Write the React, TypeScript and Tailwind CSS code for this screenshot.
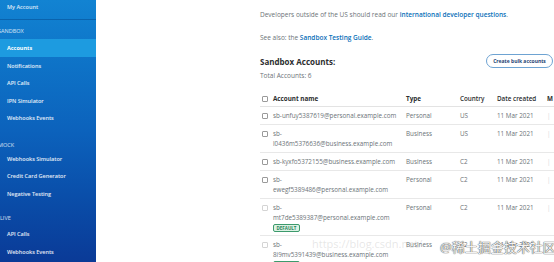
import React from 'react';

const sans = { fontFamily: '"Open Sans", "Noto Sans", "Noto Sans CJK SC", sans-serif' };

const SideItem = ({ label, active = false }: { label: string; active?: boolean }) => (
  <div
    className={
      active
        ? 'h-[18px] flex items-center pl-[7px] bg-[#1d9be0] text-white font-bold'
        : 'h-[17.5px] flex items-center pl-[7px] text-white/90 font-semibold'
    }
  >
    {label}
  </div>
);

const Checkbox = ({ faded = false }: { faded?: boolean }) => (
  <div
    className={
      faded
        ? 'ml-[2px] mt-[2px] w-[6px] h-[6px] rounded-[1px] border border-[#d4d4d4] bg-white'
        : 'ml-[2px] mt-[2px] w-[6px] h-[6px] rounded-[1px] border border-[#9a9a9a] bg-white'
    }
  />
);

const Badge = () => (
  <div className="mt-[1px] h-[8px] w-[27px] flex items-center justify-center rounded-[2px] border border-[#3c9a6c] bg-[#dcf2e4] text-[4.5px] font-bold text-[#2a855a] leading-none">
    DEFAULT
  </div>
);

const accounts = [
  { name: ['sb-unfuy5387619@personal.example.com'], type: 'Personal', country: 'US' },
  { name: ['sb-', 'l0436m5376636@business.example.com'], type: 'Business', country: 'US' },
  { name: ['sb-kyxfo5372155@business.example.com'], type: 'Business', country: 'C2' },
  { name: ['sb-', 'ewegf5389486@personal.example.com'], type: 'Personal', country: 'C2' },
  { name: ['sb-', 'mt7de5389387@personal.example.com'], type: 'Personal', country: 'C2', isDefault: true },
  { name: ['sb-', '8i9mv5391439@business.example.com'], type: 'Business', country: 'C2', isDefault: true },
];

const cols = 'grid grid-cols-[13px_133px_54px_37px_50px_60px] items-start';

export default function App() {
  return (
    <div className="relative w-[554px] h-[262px] flex overflow-hidden bg-white" style={sans}>
      {/* sidebar */}
      <div className="w-[96px] shrink-0 h-full flex flex-col bg-linear-to-b from-[#1283d2] via-[#0c62bc] to-[#0a3a97] text-[5.5px] leading-[8px]">
        <div className="h-[20px] pb-[6px] flex items-center pl-[7px] border-b border-[#0a63ad] text-white/85 font-semibold">
          My Account
        </div>
        <div className="h-[19px] pt-[3px] flex items-center -ml-[2px] text-white/80">SANDBOX</div>
        <SideItem label="Accounts" active />
        <SideItem label="Notifications" />
        <SideItem label="API Calls" />
        <SideItem label="IPN Simulator" />
        <SideItem label="Webhooks Events" />
        <div className="mt-[13px] h-[10px] flex items-center -ml-[2px] text-white/80">MOCK</div>
        <SideItem label="Webhooks Simulator" />
        <SideItem label="Credit Card Generator" />
        <SideItem label="Negative Testing" />
        <div className="h-[23px] pt-[8px] flex items-center text-white/80">LIVE</div>
        <SideItem label="API Calls" />
        <SideItem label="Webhooks Events" />
      </div>

      {/* main */}
      <div className="flex-1 pl-[164px] pt-[10px] text-[6.5px] leading-[10px] text-[#6c7378]">
        <p className="whitespace-nowrap">
          Developers outside of the US should read our{' '}
          <span className="text-[#0a6fb8] font-semibold">international developer questions</span>.
        </p>
        <p className="mt-[13px] whitespace-nowrap">
          See also: the <span className="text-[#0a6fb8] font-semibold">Sandbox Testing Guide</span>.
        </p>

        <div className="mt-[11px] w-[293px] h-[14px] flex items-center justify-between">
          <div className="text-[8px] font-bold text-[#2c2e2f] pt-[1px]">Sandbox Accounts:</div>
          <div className="h-[14px] w-[67px] flex items-center justify-center rounded-full border border-[#6ea3d2] text-[5px] font-bold text-[#1d3f73]">
            Create bulk accounts
          </div>
        </div>
        <div className="mt-[3px]">Total Accounts: 6</div>

        <div className="mt-[10px] w-[340px] text-[6.3px]">
          <div className={`${cols} pt-[3px] pb-[2px] border-b border-[#e3e3e3] text-[#2c2e2f] font-bold`}>
            <Checkbox />
            <div>Account name</div>
            <div>Type</div>
            <div className="font-semibold">Country</div>
            <div className="font-semibold">Date created</div>
            <div>M</div>
          </div>
          {accounts.map((a, i) => (
            <div key={i} className={`${cols} pt-[4px] pb-[3px] border-b border-[#e8e8e8]`}>
              <Checkbox faded={!!a.isDefault} />
              <div>
                {a.name.map((n, j) => (
                  <div key={j} className="whitespace-nowrap">{n}</div>
                ))}
                {a.isDefault && <Badge />}
              </div>
              <div>{a.type}</div>
              <div>{a.country}</div>
              <div>11 Mar 2021</div>
              <div className="text-[#d6d6d6]">|</div>
            </div>
          ))}
        </div>
      </div>

      {/* watermarks */}
      <div className="absolute left-[312px] top-[236px] text-[11px] text-[#9a9a9a]/25 whitespace-nowrap">
        https://blog.csdn.net/
      </div>
      <div className="absolute left-[440px] top-[238px] text-[13px] leading-[18px] text-[#f2f2f2] whitespace-nowrap [text-shadow:0_0_1px_#444,0_0_1px_#444]">
        @稀土掘金技术社区
      </div>
    </div>
  );
}
